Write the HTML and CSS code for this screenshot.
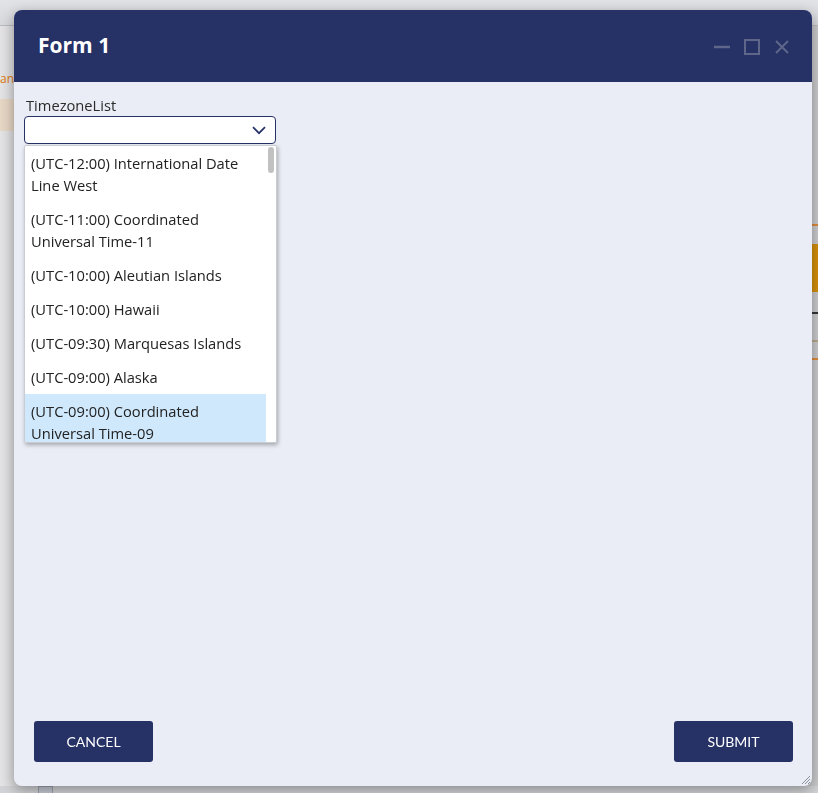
FILE: index.html
```html
<!DOCTYPE html>
<html lang="en">
<head>
  <meta charset="UTF-8" />
  <meta name="viewport" content="width=device-width, initial-scale=1.0"/>
  <title>Form 1</title>
  <link rel="stylesheet" href="styles.css">
</head>
<body>
  <!-- page behind the dialog, mostly covered -->
  <div class="backdrop">
    <div class="bd-top"></div>
    <div class="bd-main">
      <div class="bd-left">
        <div class="bd-link">ani</div>
        <div class="bd-block"></div>
      </div>
      <div class="bd-center"></div>
      <div class="bd-right">
        <div class="bd-line"></div>
        <div class="bd-gold"></div>
        <div class="bd-dash"></div>
        <div class="bd-grey"></div>
        <div class="bd-line"></div>
      </div>
    </div>
    <div class="bd-bottom"><span class="bd-box"></span></div>
  </div>

  <div class="modal">
    <div class="modal-header">
      <h2>Form 1</h2>
      <div class="win-controls">
        <svg width="16" height="16" viewBox="0 0 16 16"><path d="M0 8h16" stroke="currentColor" stroke-width="2.4"/></svg>
        <svg width="16" height="16" viewBox="0 0 16 16"><rect x="1" y="1" width="14" height="14" fill="none" stroke="currentColor" stroke-width="2"/></svg>
        <svg width="16" height="16" viewBox="0 0 16 16"><path d="M2 2l12 12M14 2L2 14" stroke="currentColor" stroke-width="2"/></svg>
      </div>
    </div>

    <div class="modal-body">
      <label class="field-label">TimezoneList</label>
      <div class="select-wrap">
        <div class="select">
          <svg class="chevron" width="14" height="9" viewBox="0 0 14 9"><path d="M1 1.2l6 6 6-6" fill="none" stroke="currentColor" stroke-width="1.7"/></svg>
        </div>
        <div class="dropdown">
          <ul class="options">
            <li>(UTC-12:00) International Date Line West</li>
            <li>(UTC-11:00) Coordinated Universal Time-11</li>
            <li>(UTC-10:00) Aleutian Islands</li>
            <li>(UTC-10:00) Hawaii</li>
            <li>(UTC-09:30) Marquesas Islands</li>
            <li>(UTC-09:00) Alaska</li>
            <li class="active">(UTC-09:00) Coordinated Universal Time-09</li>
          </ul>
          <div class="scroll-track"><div class="scroll-thumb"></div></div>
        </div>
      </div>
    </div>

    <div class="modal-footer">
      <button class="btn">Cancel</button>
      <button class="btn">Submit</button>
    </div>
    <svg class="grip" width="12" height="12" viewBox="0 0 12 12"><path d="M11 3L3 11M11 6L6 11M11 9L9 11" stroke="#8a8f9c" stroke-width="1"/></svg>
  </div>
</body>
</html>
```

FILE: styles.css
```css
* {
  margin: 0;
  padding: 0;
  box-sizing: border-box;
  font-family: 'Open Sans', 'Lato', sans-serif;
}

html, body {
  height: 100%;
}

body {
  background: #d4d4d6;
  padding: 10px 6px 7px 14px;
  overflow: hidden;
}

/* page behind */
.backdrop {
  position: fixed;
  inset: 0;
  display: flex;
  flex-direction: column;
  background: #d2d3d6;
}

.bd-top {
  height: 26px;
  background: linear-gradient(#e2e3e6, #d8d9dc);
  border-bottom: 1px solid #b9bbc0;
}

.bd-main {
  flex: 1;
  display: flex;
}

.bd-left {
  width: 40px;
  padding-top: 45px;
  background: linear-gradient(90deg, #e4e4e6, #cfcfd2);
}

.bd-link {
  font-size: 12px;
  line-height: 16px;
  color: #e07a10;
}

.bd-block {
  height: 32px;
  margin-top: 12px;
  background: #e6d6c4;
}

.bd-center {
  flex: 1;
}

.bd-right {
  width: 40px;
  padding-top: 198px;
  display: flex;
  flex-direction: column;
  background: #cbcbcd;
}

.bd-line {
  height: 2px;
  background: #e08a3a;
  margin: 0 0 18px;
}

.bd-gold {
  height: 48px;
  background: #d4900c;
}

.bd-dash {
  width: 6px;
  height: 2px;
  margin: 20px 0 0 34px;
  background: #333;
}

.bd-grey {
  height: 2px;
  margin: 26px 0 16px;
  background: #b9a98a;
}

.bd-bottom {
  height: 7px;
  padding-left: 38px;
}

.bd-box {
  display: block;
  width: 15px;
  height: 7px;
  background: #c6cad3;
  border: 1px solid #9da2ad;
  border-bottom: none;
}

/* dialog */
.modal {
  position: relative;
  z-index: 1;
  width: 798px;
  height: 776px;
  display: flex;
  flex-direction: column;
  background: #eaedf5;
  border-radius: 8px;
  overflow: hidden;
  box-shadow: 0 4px 14px rgba(0, 0, 0, 0.35);
}

.modal-header {
  height: 72px;
  flex-shrink: 0;
  background: #263166;
  display: flex;
  align-items: center;
  justify-content: space-between;
  padding: 0 22px 0 24px;
}

.modal-header h2 {
  color: #fff;
  font-size: 21px;
  font-weight: 700;
  margin-top: -2px;
}

.win-controls {
  display: flex;
  gap: 14px;
  color: #5e668a;
  margin-top: 2px;
}

.modal-body {
  flex: 1;
  padding: 14px 10px 0;
}

.field-label {
  display: block;
  font-size: 14.7px;
  line-height: 18px;
  color: #2b2b2b;
  margin: 0 0 2px 2px;
}

.select-wrap {
  position: relative;
  width: 252px;
}

.select {
  height: 28px;
  background: #fff;
  border: 1px solid #263166;
  border-radius: 4px;
  display: flex;
  align-items: center;
  justify-content: flex-end;
  padding-right: 9px;
}

.chevron {
  color: #263166;
}

.dropdown {
  position: absolute;
  top: 29px;
  left: 0;
  width: 253px;
  height: 298px;
  background: #fff;
  border: 1px solid #c9ccd3;
  border-radius: 2px;
  box-shadow: 1px 2px 4px rgba(0, 0, 0, 0.3);
  display: flex;
  overflow: hidden;
}

.options {
  list-style: none;
  width: 241px;
  flex-shrink: 0;
}

.options li {
  font-size: 14.7px;
  line-height: 22px;
  color: #222;
  padding: 6px;
}

.options li.active {
  background: #cfe8fc;
}

.scroll-track {
  flex: 1;
  padding: 1px 2px 0 2px;
}

.scroll-thumb {
  height: 26px;
  background: #c1c1c1;
  border-radius: 3px;
}

.modal-footer {
  display: flex;
  justify-content: space-between;
  padding: 0 19px 24px 20px;
}

.btn {
  width: 119px;
  height: 41px;
  background: #263166;
  color: #fff;
  border: none;
  border-radius: 3px;
  font-family: 'Lato', sans-serif;
  font-size: 14px;
  text-transform: uppercase;
  cursor: pointer;
}

.grip {
  position: absolute;
  right: 1px;
  bottom: 1px;
}
```
